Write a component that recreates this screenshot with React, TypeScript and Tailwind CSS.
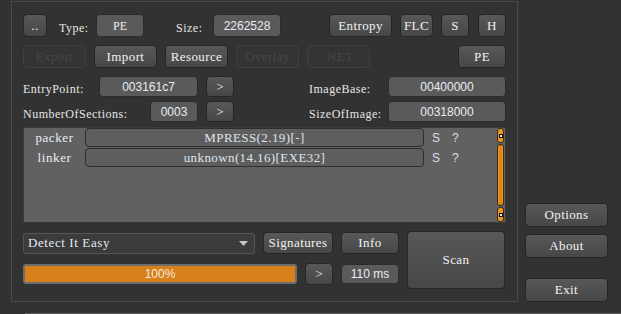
import React from "react";

const serif = { fontFamily: '"Liberation Serif", "DejaVu Serif", serif' };
const sans = { fontFamily: '"Liberation Sans", Arial, sans-serif' };

const Btn = ({ w, h = "h-[23px]", children }: { w: string; h?: string; children: React.ReactNode }) => (
  <div
    className={`${w} ${h} shrink-0 flex items-center justify-center rounded-[4px] border border-[#262626] bg-gradient-to-b from-[#585858] to-[#474747] text-[13px] tracking-[0.4px] text-[#f2f2f2]`}
    style={serif}
  >
    {children}
  </div>
);

const Off = ({ children }: { children: React.ReactNode }) => (
  <div
    className="w-[63px] h-[23px] shrink-0 flex items-center justify-center rounded-[4px] border border-[#3f3f3f] bg-[#343434] text-[13px] tracking-[0.4px] text-[#474747]"
    style={serif}
  >
    {children}
  </div>
);

const Val = ({ w, h = "h-[21px]", children, font = sans }: { w: string; h?: string; children: React.ReactNode; font?: React.CSSProperties }) => (
  <div
    className={`${w} ${h} shrink-0 flex items-center justify-center rounded-[4px] border border-[#2c2c2c] bg-[#5a5a5a] text-[12px] text-[#e8ecf2]`}
    style={font}
  >
    {children}
  </div>
);

const Label = ({ children }: { children: React.ReactNode }) => (
  <span className="text-[12px] tracking-[0.5px] text-[#e6e6e6] whitespace-nowrap" style={serif}>
    {children}
  </span>
);

const Arrow = () => (
  <div className="h-[15px] rounded-[3px] border border-[#3a2a10] bg-[#ec9522] flex items-center justify-center">
    <div className="w-[4px] h-[4px] bg-[#111] flex items-center justify-center">
      <div className="w-[2px] h-[2px] bg-[#eee]" />
    </div>
  </div>
);

const Result = ({ name, value }: { name: string; value: string }) => (
  <div className="flex items-center h-[19px]">
    <div className="w-[61px] text-center text-[13px] tracking-[0.6px] text-[#e8ecf4]" style={serif}>
      {name}
    </div>
    <div
      className="w-[339px] h-[19px] flex items-center justify-center rounded-[4px] border border-[#2e2e2e] bg-[#5e5e5e] text-[13px] tracking-[0.4px] text-[#dfe5ee]"
      style={serif}
    >
      {value}
    </div>
    <span className="ml-[8px] text-[12px] text-[#d9dfe9]" style={sans}>S</span>
    <span className="ml-[12px] text-[12px] text-[#d9dfe9]" style={sans}>?</span>
  </div>
);

export default function App() {
  return (
    <div className="w-[621px] h-[314px] bg-[#323232] flex flex-col overflow-hidden">
      <div className="h-[313px] flex pt-[1px]">
        <div className="ml-[11px] w-[507px] h-[301px] border border-[#4a4a4a] pt-[12px] px-[11px] flex flex-col">
          <div className="h-[23px] flex items-center">
            <Btn w="w-[24px]">..</Btn>
            <div className="ml-[12px] w-[37px]"><Label>Type:</Label></div>
            <Val w="w-[48px]" h="h-[23px]" font={serif}>PE</Val>
            <div className="ml-[32px] w-[37px]"><Label>Size:</Label></div>
            <Val w="w-[68px]" h="h-[23px]">2262528</Val>
            <div className="ml-auto flex items-center">
              <Btn w="w-[63px]">Entropy</Btn>
              <div className="ml-2"><Btn w="w-[33px]">FLC</Btn></div>
              <div className="ml-2"><Btn w="w-[28px]">S</Btn></div>
              <div className="ml-[9px]"><Btn w="w-[28px]">H</Btn></div>
            </div>
          </div>

          <div className="mt-2 h-[23px] flex items-center gap-2">
            <Off>Export</Off>
            <Btn w="w-[63px]">Import</Btn>
            <Btn w="w-[63px]">Resource</Btn>
            <Off>Overlay</Off>
            <Off>.NET</Off>
            <div className="ml-auto"><Btn w="w-[48px]">PE</Btn></div>
          </div>

          <div className="mt-2 h-[21px] flex items-center">
            <div className="w-[211px] flex items-center">
              <div className="flex-1"><Label>EntryPoint:</Label></div>
              <Val w="w-[99px]">003161c7</Val>
              <div className="ml-2"><Btn w="w-[28px]" h="h-[21px]">&gt;</Btn></div>
            </div>
            <div className="ml-auto w-[197px] flex items-center">
              <div className="flex-1"><Label>ImageBase:</Label></div>
              <Val w="w-[118px]">00400000</Val>
            </div>
          </div>

          <div className="mt-1 h-[21px] flex items-center">
            <div className="w-[211px] flex items-center">
              <div className="flex-1"><Label>NumberOfSections:</Label></div>
              <Val w="w-[48px]">0003</Val>
              <div className="ml-2"><Btn w="w-[28px]" h="h-[21px]">&gt;</Btn></div>
            </div>
            <div className="ml-auto w-[197px] flex items-center">
              <div className="flex-1"><Label>SizeOfImage:</Label></div>
              <Val w="w-[118px]">00318000</Val>
            </div>
          </div>

          <div className="mt-[5px] h-[96px] border border-[#3a3a3a] bg-[#616161] flex">
            <div className="flex-1 flex flex-col gap-[1px]">
              <Result name="packer" value="MPRESS(2.19)[-]" />
              <Result name="linker" value="unknown(14.16)[EXE32]" />
            </div>
            <div className="w-[7px] mr-[1px] flex flex-col gap-[1px]">
              <Arrow />
              <div className="flex-1 rounded-[3px] border border-[#3a2a10] bg-gradient-to-r from-[#f09a28] via-[#d87f12] to-[#f09a28]" />
              <Arrow />
            </div>
          </div>

          <div className="mt-2 flex">
            <div className="w-[376px] flex flex-col">
              <div className="mt-[1px] h-[22px] flex items-center">
                <div
                  className="w-[232px] h-[21px] flex items-center rounded-[3px] border border-[#555] bg-[#3b3b3b] pl-[4px] pr-[6px] text-[13px] tracking-[0.6px] text-[#e4eaf3]"
                  style={serif}
                >
                  <span className="flex-1">Detect It Easy</span>
                  <svg width="9" height="5" viewBox="0 0 9 5">
                    <path d="M0 0h9L4.5 5z" fill="#c4c4c4" />
                  </svg>
                </div>
                <div className="ml-2"><Btn w="w-[70px]" h="h-[22px]">Signatures</Btn></div>
                <div className="ml-2"><Btn w="w-[58px]" h="h-[22px]">Info</Btn></div>
              </div>
              <div className="mt-[9px] h-[22px] flex items-center">
                <div
                  className="w-[274px] h-[20px] flex items-center justify-center rounded-[3px] border-2 border-[#6e6e6e] bg-[#d8801a] text-[12px] text-[#f4ecdf]"
                  style={sans}
                >
                  100%
                </div>
                <div className="ml-2"><Btn w="w-[28px]" h="h-[22px]">&gt;</Btn></div>
                <div className="ml-2"><Val w="w-[58px]" h="h-[20px]">110 ms</Val></div>
              </div>
            </div>
            <div className="ml-2"><Btn w="w-[98px]" h="h-[58px]">Scan</Btn></div>
          </div>
        </div>

        <div className="ml-[7px] w-[83px] pt-[202px] flex flex-col">
          <Btn w="w-[83px]" h="h-[24px]">Options</Btn>
          <div className="mt-[7px]"><Btn w="w-[83px]" h="h-[24px]">About</Btn></div>
          <div className="mt-[20px]"><Btn w="w-[83px]" h="h-[24px]">Exit</Btn></div>
        </div>
      </div>
      <div className="h-[1px] ml-[25px] bg-[#5c5c5c]" />
    </div>
  );
}
